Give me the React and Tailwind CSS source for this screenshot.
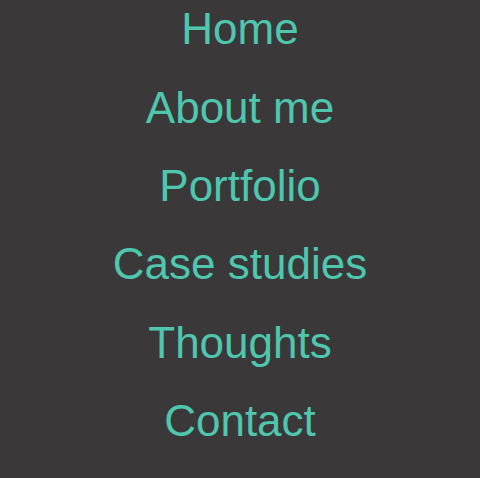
export default function App() {
  const items = ["Home", "About me", "Portfolio", "Case studies", "Thoughts", "Contact"];
  return (
    <div className="w-[480px] h-[478px] overflow-hidden bg-[#3a3839]">
      <nav className="-mt-[9.6px] flex flex-col items-center">
        {items.map((t) => (
          <a
            key={t}
            href="#"
            className="block text-[44px] leading-[78.3px] text-[#4fc6ae] font-['Liberation_Sans',Arial,sans-serif]"
          >
            {t}
          </a>
        ))}
      </nav>
    </div>
  );
}
